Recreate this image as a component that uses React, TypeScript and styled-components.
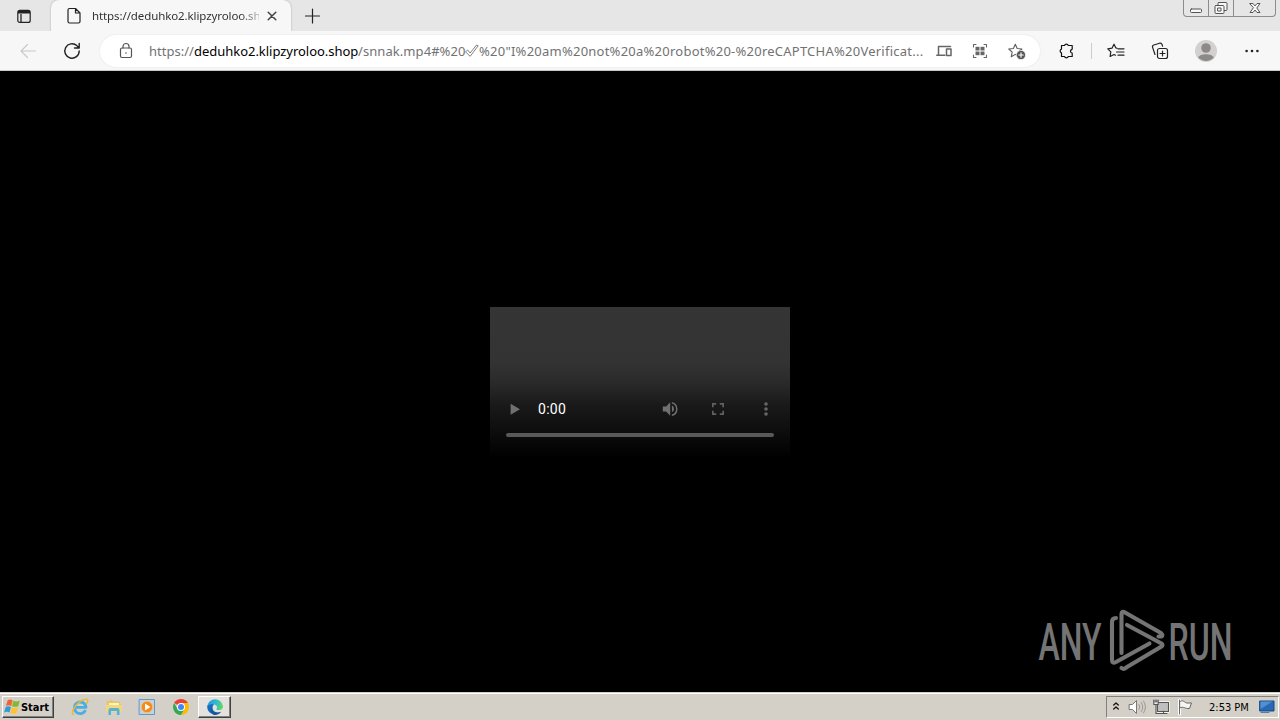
import type { ReactNode } from "react";
import styled, { createGlobalStyle, css } from "styled-components";

const GlobalStyle = createGlobalStyle`
  * {
    box-sizing: border-box;
  }

  body {
    margin: 0;
    overflow: hidden;
    background: #000;
  }
`;

const Screen = styled.div`
  display: flex;
  flex-direction: column;
  width: 1280px;
  height: 720px;
  font-family: "Noto Sans", "Open Sans", sans-serif;
  overflow: hidden;
`;

const TabStrip = styled.div`
  display: flex;
  flex: none;
  height: 31px;
  background: #e6e6e6;
`;

const Cell = styled.div<{ $width: number; $color?: string }>`
  display: flex;
  flex: none;
  align-items: center;
  justify-content: center;
  width: ${({ $width }) => $width}px;
  color: ${({ $color }) => $color || "#222"};
`;

const Tab = styled.div`
  display: flex;
  align-items: center;
  width: 240px;
  height: 31px;
  margin-left: 3px;
  padding: 1px 12px 0 14px;
  background: #f7f7f7;
  border-radius: 8px 8px 0 0;
  box-shadow: 0 0 2px rgb(0 0 0 / 0.3);
  color: #333;
`;

const TabTitle = styled.div`
  width: 167px;
  margin-left: 9px;
  margin-right: 5px;
  font-size: 11.5px;
  letter-spacing: -0.1px;
  line-height: 20px;
  white-space: nowrap;
  mask-image: linear-gradient(to right, #000 148px, transparent 174px);
`;

const WindowButtons = styled.div`
  display: flex;
  width: 93px;
  height: 17px;
  margin-left: auto;
  margin-right: 4px;
  border: 1px solid #8c8c8c;
  border-top: 0;
  border-radius: 0 0 4px 4px;
`;

const WindowButton = styled.div<{ $width: number }>`
  display: flex;
  align-items: center;
  justify-content: center;
  width: ${({ $width }) => $width}px;
  color: #555;

  & + & {
    border-left: 1px solid #8c8c8c;
  }
`;

const Toolbar = styled.div`
  display: flex;
  flex: none;
  align-items: center;
  height: 40px;
  background: #f7f7f7;
  border-bottom: 1px solid #c9c9c9;
`;

const AddressBar = styled.div`
  display: flex;
  align-items: center;
  width: 940px;
  height: 32px;
  margin-left: 5px;
  padding-left: 17px;
  background: #fff;
  border-radius: 16px;
  box-shadow: 0 0 2px rgb(0 0 0 / 0.1);
`;

const Url = styled.div`
  display: flex;
  align-items: center;
  width: 778px;
  margin-left: 14px;
  font-size: 13px;
  line-height: 20px;
  white-space: pre;
`;

const UrlPart = styled.span<{ $width: number; $spacing?: number; $strong?: boolean }>`
  flex: none;
  width: ${({ $width }) => $width}px;
  letter-spacing: ${({ $spacing }) => $spacing || 0}px;
  color: ${({ $strong }) => ($strong ? "#000" : "#727272")};
`;

const Separator = styled.div`
  width: 1px;
  height: 16px;
  margin: 0 3px 0 0;
  background: #ccc;
`;

const Viewport = styled.main`
  display: flex;
  flex: 1;
  align-items: center;
  justify-content: center;
  position: relative;
  background: #000;
`;

const Player = styled.div`
  display: flex;
  flex-direction: column;
  justify-content: flex-end;
  width: 300px;
  height: 150px;
  margin-top: 1px;
  background: linear-gradient(#353535 0, #333 55px, #292929 77px, #1a1a1a 97px, #0f0f0f 120px, #050505 140px, #000 150px);
`;

const Controls = styled.div`
  display: flex;
  align-items: center;
  height: 48px;
  color: #666;
`;

const Time = styled.div`
  flex: 1;
  font-family: Roboto, sans-serif;
  font-size: 14px;
  letter-spacing: 0.3px;
  line-height: 20px;
  color: #fff;
`;

const Timeline = styled.div`
  height: 4px;
  margin: 0 16px 20px;
  background: #595959;
  border-radius: 2px;
`;

const Watermark = styled.div`
  position: absolute;
  right: 46px;
  bottom: 18px;
  height: 68px;
`;

const Taskbar = styled.footer`
  display: flex;
  flex: none;
  height: 28px;
  padding: 3px 1px 2px 2px;
  background: #d4d0c8;
  border-top: 1px solid #d4d0c8;
  box-shadow: inset 0 1px 0 #fff;
  font-family: "DejaVu Sans Condensed", "DejaVu Sans", sans-serif;
`;

const raised = css`
  border: 1px solid;
  border-color: #fff #404040 #404040 #fff;
  box-shadow: inset -1px -1px 0 #808080;
`;

const StartButton = styled.div`
  display: flex;
  align-items: center;
  width: 52px;
  height: 22px;
  padding-left: 1px;
  ${raised}
  font-size: 11px;
  font-weight: 700;
  letter-spacing: -0.05px;
  color: #000;
`;

const QuickLaunch = styled.div`
  display: flex;
  margin-left: 9px;
`;

const TaskButton = styled.div`
  display: flex;
  align-items: center;
  justify-content: center;
  width: 33px;
  height: 22px;
  margin-left: 1px;
  ${raised}
  background: #e5e2dd;
`;

const Tray = styled.div`
  display: flex;
  align-items: center;
  width: 173px;
  height: 22px;
  margin-left: auto;
  border: 1px solid;
  border-color: #808080 #fff #fff #808080;
`;

const Clock = styled.div`
  width: 59px;
  padding-left: 12px;
  font-size: 11px;
  white-space: nowrap;
  color: #000;
`;

const Drawing = styled.svg`
  display: block;
  flex: none;
  overflow: visible;
`;

type IconProps = { w?: number; h?: number; stroke?: number; children: ReactNode };

const Icon = ({ w = 16, h = 16, stroke = 1.1, children }: IconProps) => (
  <Drawing
    width={w}
    height={h}
    viewBox={`0 0 ${w} ${h}`}
    fill="none"
    stroke="currentColor"
    strokeWidth={stroke}
    strokeLinecap="round"
    strokeLinejoin="round"
  >
    {children}
  </Drawing>
);

const STAR = "M7.3 1.2 9.2 5.5l4.7.5-3.5 3.2 1 4.6-4.1-2.4-4.1 2.4 1-4.6L.8 6l4.6-.5z";

const WindowControls = () => (
  <WindowButtons>
    <WindowButton $width={24}>
      <Icon stroke={1}><rect x="2.5" y="9" width="11" height="3.5" rx="1" fill="#f7f7f7" /></Icon>
    </WindowButton>
    <WindowButton $width={25}>
      <Icon stroke={1}>
        <rect x="5" y="2.5" width="9" height="8" rx="1" fill="#f7f7f7" />
        <rect x="2" y="5.5" width="9" height="8" rx="1" fill="#f7f7f7" />
        <rect x="5" y="8" width="3" height="3" />
      </Icon>
    </WindowButton>
    <WindowButton $width={42}>
      <Icon w={12} h={12} stroke={1}>
        <path d="M1 1.5h3l2 2.4 2-2.4h3L7.8 6 11 10.5H8L6 8.1l-2 2.4H1L4.2 6z" fill="#f7f7f7" />
      </Icon>
    </WindowButton>
  </WindowButtons>
);

const AddressIcons = () => (
  <>
    <Cell $width={34} $color="#666">
      <Icon stroke={1.5}>
        <path d="M14.5 3.5h-12v8M.8 12.3h8" />
        <rect x="10.5" y="6" width="4.5" height="6.5" />
      </Icon>
    </Cell>
    <Cell $width={38} $color="#666">
      <Icon stroke={1.1}>
        <path d="M1.5 4V1.5H4M12 1.5h2.5V4M14.5 12v2.5H12M4 14.5H1.5V12" />
        <g fill="currentColor" stroke="none">
          <rect x="3.5" y="3.8" width="4" height="3.7" />
          <rect x="8.5" y="3.8" width="4" height="3.7" />
          <rect x="3.5" y="8.5" width="4" height="3.7" />
          <rect x="8.5" y="8.5" width="4" height="3.7" />
        </g>
      </Icon>
    </Cell>
    <Cell $width={36} $color="#5c5c5c">
      <Icon w={18} h={16}>
        <path d={STAR} />
        <circle cx="13" cy="12" r="4.6" fill="#555" stroke="#fff" strokeWidth="0.6" />
        <path d="M13 9.8v4.4M10.8 12h4.4" stroke="#fff" />
      </Icon>
    </Cell>
  </>
);

const MediaPlayer = () => (
  <Player>
    <Controls>
      <Cell $width={48} $color="#707070">
        <Icon w={18} h={18} stroke={0}><path d="M5.6 3.8v10.9L15 9.2z" fill="currentColor" /></Icon>
      </Cell>
      <Time>0:00</Time>
      <Cell $width={48} $color="#707070">
        <Icon w={18} h={18} stroke={0}>
          <path fill="currentColor" d="M1.8 6.5v5h3.3l4.1 4.2V2.3L5.1 6.5zM13 9a3.7 3.7 0 0 0-2.1-3.4v6.7A3.7 3.7 0 0 0 13 9zM10.9 1.9v1.7a5.6 5.6 0 0 1 0 10.8v1.7a7.3 7.3 0 0 0 0-14.2z" />
        </Icon>
      </Cell>
      <Cell $width={48} $color="#606060">
        <Icon w={18} h={18} stroke={0}>
          <path fill="currentColor" d="M3 3h4.2v1.7H4.7v2.5H3zM10.8 3H15v4.2h-1.7V4.7h-2.5zM13.3 10.8H15V15h-4.2v-1.7h2.5zM3 10.8h1.7v2.5h2.5V15H3z" />
        </Icon>
      </Cell>
      <Cell $width={48} $color="#666">
        <Icon w={18} h={18} stroke={0}>
          <g fill="currentColor">
            <circle cx="9" cy="4" r="1.8" />
            <circle cx="9" cy="9" r="1.8" />
            <circle cx="9" cy="14" r="1.8" />
          </g>
        </Icon>
      </Cell>
    </Controls>
    <Timeline />
  </Player>
);

const BrandMark = () => (
  <Watermark>
    <Drawing width="198" height="68" viewBox="1036 606 198 68" fill="#747474">
      <g fontFamily="Roboto, sans-serif" fontSize="52" fontWeight="500">
        <text x="1038.5" y="659.5" textLength="63" lengthAdjust="spacingAndGlyphs">ANY</text>
        <text x="1168.5" y="659.5" textLength="64" lengthAdjust="spacingAndGlyphs">RUN</text>
      </g>
      <g fill="none" stroke="#747474" strokeWidth="4.1" strokeLinejoin="round" strokeLinecap="round">
        <path d="M1121.5 653V614q0-3.5 3.5-1.5l36 20.5q2.5 2.5.5 3.5h-3" />
        <path d="M1116 618q-4 0-4 4v38q0 4 4 2l33.5-18.5" />
        <path d="M1127 625l34.5 18.5q2 1.5 0 3L1127 667q-3 3-5.5 1" />
      </g>
    </Drawing>
  </Watermark>
);

const StartFlag = () => (
  <Icon w={17} h={16} stroke={0}>
    <path d="M3.7 1.3Q6.3-.2 8.6 1.4L7.2 7Q4.7 5.6 1.9 7.1z" fill="#ee6534" />
    <path d="M9.4 1.7q2.8 1.5 6.4 0l-1.6 5.5q-3.3 1.3-6.2 0z" fill="#83b92f" />
    <path d="M1.7 8q2.9-1.3 5.2.1l-1.4 5.3Q3 12.2.1 13.4z" fill="#2e9bdd" />
    <path d="M7.7 8.4q2.9 1.2 6.3.1L12.5 14q-2.9 1.1-6.2-.1z" fill="#ffc42d" />
  </Icon>
);

const ExplorerIcon = () => (
  <Icon w={18} h={18} stroke={0}>
    <path d="M14.5 12.2A5.8 5.8 0 1 1 15 9.4H5" fill="none" stroke="#4aaee3" strokeWidth="2.8" strokeLinecap="butt" />
    <path d="M2.4 16.5C-1.2 15 5 5.2 12 2c5-2.2 5.8.6 3.6 3.5" fill="none" stroke="#e7b936" strokeWidth="1.4" />
  </Icon>
);

const FolderIcon = () => (
  <Icon w={18} h={18} stroke={0}>
    <path d="M1.5 3.5 7 2l1 1.5h6.5l1.5 3V14h-14z" fill="#e5c565" />
    <path d="M4 5h10v5H4z" fill="#fff4b5" />
    <path d="M1 7h16v7H1z" fill="#f0d784" />
    <path d="M3.5 17v-5q0-2 2-2h7q2 0 2 2v5h-2.6v-4H6v4z" fill="#58b2d3" />
  </Icon>
);

const MediaIcon = () => (
  <Icon w={18} h={18} stroke={1}>
    <rect x="1.5" y="1.5" width="15" height="15" fill="#b8d5ef" stroke="#6896c4" />
    <circle cx="9" cy="9" r="5.8" fill="#f58a17" stroke="#fac070" />
    <path d="M7 5.5v7L12.4 9z" fill="#fff" stroke="none" />
  </Icon>
);

const ChromeIcon = () => (
  <Icon w={16} h={16} stroke={0}>
    <path d="M8 8 1.1 4A8 8 0 0 1 14.9 4z" fill="#e94235" />
    <path d="M8 8V4h6.9A8 8 0 0 1 8 16l3.4-6z" fill="#fbbc04" />
    <path d="M8 16A8 8 0 0 1 1.1 4l3.5 6L8 12l3.4-2z" fill="#34a853" />
    <circle cx="8" cy="8" r="4" fill="#fff" />
    <circle cx="8" cy="8" r="3" fill="#4285f4" />
  </Icon>
);

const EdgeIcon = () => (
  <Drawing width="16" height="16" viewBox="0 0 16 16">
    <defs>
      <linearGradient id="edgeTop" x1="0" x2="1" y1=".3" y2=".5">
        <stop stopColor="#2498db" />
        <stop offset=".6" stopColor="#35bdcb" />
        <stop offset="1" stopColor="#66d85b" />
      </linearGradient>
    </defs>
    <path d="M.2 7A8 8 0 0 1 16 7c.2 3-2 4.1-4.2 4.1-2 0-3-.7-2.1-1.6C11 7 7.8 5 5.2 5.3 3 5.4 1.3 6.2.2 8z" fill="url(#edgeTop)" />
    <path d="M.2 7.5C1.5 5 5 4.3 7.4 5.5 5 6.5 4.8 10.2 7 12c2 1.7 5 2 7.5.5A8 8 0 0 1 .2 7.5z" fill="#126cc1" />
    <path d="M5.6 7.5c-2 5 3 7.7 8.5 5.5A8 8 0 0 1 7 16c-4-2-4.3-6.5-1.4-8.5z" fill="#17559c" />
  </Drawing>
);

const TrayIcons = () => (
  <>
    <Cell $width={17} $color="#111">
      <Icon w={8} h={12} stroke={1.3}><path d="m1.7 4 2.3-2 2.3 2M1.7 8 4 6l2.3 2" /></Icon>
    </Cell>
    <Cell $width={26} $color="#777">
      <Icon w={18} stroke={1}>
        <path d="M1.5 5.5h3l4-4v13l-4-4h-3z" fill="#fff" />
        <path d="M11 5.5q1.7 2.5 0 5M13.3 3.5q3 4.5 0 9M15.5 2q4 6 0 12" stroke="#999" />
      </Icon>
    </Cell>
    <Cell $width={22} $color="#555">
      <Icon stroke={1.1}>
        <rect x="4.5" y="3.5" width="11" height="9" fill="#c5c5c5" stroke="#fff" strokeWidth="2.5" />
        <rect x="4.5" y="3.5" width="11" height="9" fill="#c0c0c0" />
        <path d="M7 14.5h7M10.5 12v2.5M3 6v8.5h4" />
        <path d="M.8 1v4.5h4.4V1M2.2 1v2M3.8 1v2" fill="#eee" />
      </Icon>
    </Cell>
    <Cell $width={25} $color="#666">
      <Icon stroke={1}>
        <path d="M2.5 1v14" stroke="#fff" strokeWidth="3" />
        <path d="M2.5 1v14M3 2.5c3-2 4 .5 6.5 1.5h5l-2 5.5C8 10 7 7 3 8.8z" fill="#f5f5f3" />
      </Icon>
    </Cell>
  </>
);

const App = () => (
  <Screen>
    <GlobalStyle />
    <TabStrip>
      <Cell $width={48}>
        <Icon stroke={1.2}>
          <rect x="1.8" y="2.4" width="12.4" height="12" rx="2" />
          <path d="M2 4.2h12" strokeWidth="2.6" strokeLinecap="butt" />
          <path d="M5 6v8" strokeWidth="1.3" strokeLinecap="butt" />
        </Icon>
      </Cell>
      <Tab>
        <Cell $width={18}>
          <Icon w={16} h={18} stroke={1.2}>
            <path d="M3.5 1.5h6L14 6v8.5q0 1.5-1.5 1.5h-9Q2 16 2 14.5V3q0-1.5 1.5-1.5zM9.5 1.5V6H14" />
          </Icon>
        </Cell>
        <TabTitle>https://deduhko2.klipzyroloo.sh</TabTitle>
        <Cell $width={16} $color="#444">
          <Icon w={12} h={12} stroke={1.5}><path d="m2.2 2.2 7.6 7.6M9.8 2.2 2.2 9.8" /></Icon>
        </Cell>
      </Tab>
      <Cell $width={43}>
        <Icon stroke={1.2}><path d="M7.5 1v14M.5 8h14" /></Icon>
      </Cell>
      <WindowControls />
    </TabStrip>

    <Toolbar>
      <Cell $width={56} $color="#c8c8c8">
        <Icon><path d="M15.5 8H1M7.5 1.5 1 8l6.5 6.5" /></Icon>
      </Cell>
      <Cell $width={32}>
        <Icon w={18} h={18} stroke={1.4}>
          <path d="M16.2 9A7.2 7.2 0 1 1 13.8 3.6L16 6M16.2 1.5V6H11.5" />
        </Icon>
      </Cell>
      <Cell $width={7} />
      <AddressBar>
        <Cell $width={18} $color="#555">
          <Icon w={16} h={18} stroke={1.2}>
            <rect x="2.5" y="6" width="11" height="9.5" rx="1.5" />
            <path d="M5 6V4.5a3 3 0 0 1 6 0V6" />
            <circle cx="8" cy="11" r=".8" fill="currentColor" stroke="none" />
          </Icon>
        </Cell>
        <Url>
          <UrlPart $width={45}>https://</UrlPart>
          <UrlPart $width={164} $spacing={-0.03} $strong>deduhko2.klipzyroloo.shop</UrlPart>
          <UrlPart $width={107} $spacing={0.07}>/snnak.mp4#%20</UrlPart>
          <Cell $width={14} $color="#727272">
            <Icon w={14} h={14} stroke={0.9}>
              <path d="M.8 7.6 2.6 6l2.5 3L11.6 1l1.6.8L5.4 12z" />
            </Icon>
          </Cell>
          <UrlPart $width={448} $spacing={0.24}>{'%20"I%20am%20not%20a%20robot%20-%20reCAPTCHA%20Verificat...'}</UrlPart>
        </Url>
        <AddressIcons />
      </AddressBar>
      <Cell $width={51} $color="#111">
        <Icon w={18} stroke={1.2}>
          <path d="M4.5 2.5h3a2 2 0 0 1 3.8 0h3.9V6a.6.6 0 0 1-.6.6 1.7 1.7 0 0 0 0 3.2.6.6 0 0 1 .6.6v3.1h-3.9a2 2 0 0 1-3.8 0h-3V9.9a2 2 0 0 1 0-3.8z" />
        </Icon>
      </Cell>
      <Separator />
      <Cell $width={42}>
        <Icon w={18} stroke={1.2}>
          <path d="M10 5.3 8.9 4.9 7 1.2 5 5.2.8 5.9l3 3-.7 4.6 4-2 1.4.7M11 5.8h6M9.5 9h7.5M11 12.2h6" />
        </Icon>
      </Cell>
      <Cell $width={45}>
        <Icon w={18} h={18} stroke={1.2}>
          <rect x="6.5" y="6.5" width="10" height="10" rx="2" />
          <path d="M11.5 9v5M9 11.5h5M4 12.5 1.6 5.4q-.6-1.8 1.2-2.4l5.8-1.8q1.8-.5 2.4 1.2l.6 1.8" />
        </Icon>
      </Cell>
      <Cell $width={48}>
        <Icon w={22} h={22} stroke={0}>
          <circle cx="11" cy="11" r="11" fill="#d3d1cf" />
          <circle cx="11" cy="8" r="4.8" fill="#8d8986" />
          <path d="M3.2 17.5c1.5-4.5 14.1-4.5 15.6 0a10.5 10.5 0 0 1-15.6 0z" fill="#8d8986" />
        </Icon>
      </Cell>
      <Cell $width={44}>
        <Icon stroke={0}>
          <g fill="currentColor">
            <circle cx="2.6" cy="8" r="1.3" />
            <circle cx="8" cy="8" r="1.3" />
            <circle cx="13.4" cy="8" r="1.3" />
          </g>
        </Icon>
      </Cell>
    </Toolbar>

    <Viewport>
      <MediaPlayer />
      <BrandMark />
    </Viewport>

    <Taskbar>
      <StartButton><StartFlag />Start</StartButton>
      <QuickLaunch>
        <Cell $width={34}><ExplorerIcon /></Cell>
        <Cell $width={33}><FolderIcon /></Cell>
        <Cell $width={34}><MediaIcon /></Cell>
        <Cell $width={33}><ChromeIcon /></Cell>
      </QuickLaunch>
      <TaskButton><EdgeIcon /></TaskButton>
      <Tray>
        <TrayIcons />
        <Clock>2:53 PM</Clock>
        <Cell $width={22}>
          <Icon stroke={1}>
            <rect x="1" y="2" width="14" height="10" fill="#2769b4" stroke="#174b88" />
            <path d="M1.5 10V2.5h12z" fill="#5290d0" stroke="none" />
            <path d="M2 13.5h8" stroke="#5080b0" />
          </Icon>
        </Cell>
      </Tray>
    </Taskbar>
  </Screen>
);

export default App;
